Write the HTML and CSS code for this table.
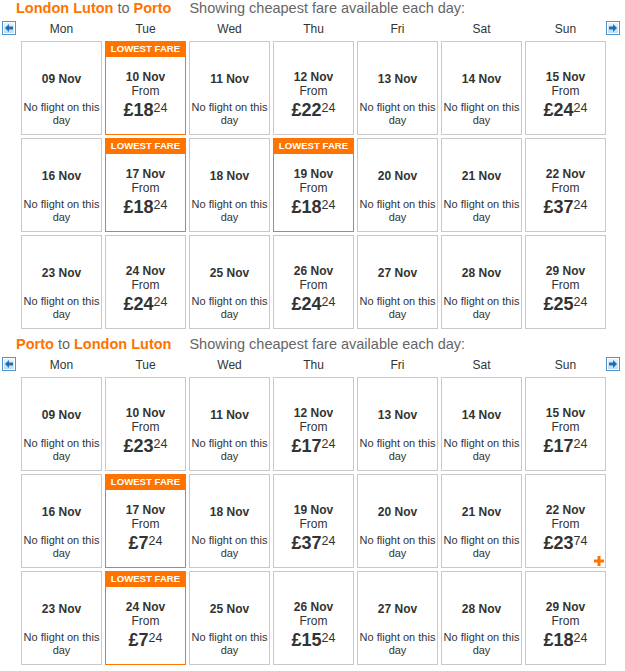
FILE: index.html
```html
<!DOCTYPE html>
<html>
<head>
<meta charset="utf-8">
<link rel="stylesheet" href="styles.css">
</head>
<body>
<div class="section">
  <div class="title"><span class="place">London Luton</span> <span class="to">to</span> <span class="place">Porto</span><span class="sub">Showing cheapest fare available each day:</span></div>
  <div class="weekrow">
    <div class="navl"><svg class="arrow" width="14" height="14" viewBox="0 0 14 14"><defs><linearGradient id="g1" x1="0" y1="0" x2="0" y2="1"><stop offset="0" stop-color="#eaf5fd"/><stop offset="1" stop-color="#b9daf2"/></linearGradient></defs><rect x="0.5" y="0.5" width="13" height="13" fill="url(#g1)" stroke="#4f94cd"/><rect x="1.5" y="1.5" width="11" height="11" fill="none" stroke="#ffffff"/><path d="M3 7 L7 3 L7 5.5 L11 5.5 L11 8.5 L7 8.5 L7 11 Z" fill="#1f6fb5"/></svg></div>
    <div class="days"><span>Mon</span><span>Tue</span><span>Wed</span><span>Thu</span><span>Fri</span><span>Sat</span><span>Sun</span></div>
    <div class="navr"><svg class="arrow" width="14" height="14" viewBox="0 0 14 14"><defs><linearGradient id="g2" x1="0" y1="0" x2="0" y2="1"><stop offset="0" stop-color="#eaf5fd"/><stop offset="1" stop-color="#b9daf2"/></linearGradient></defs><rect x="0.5" y="0.5" width="13" height="13" fill="url(#g2)" stroke="#4f94cd"/><rect x="1.5" y="1.5" width="11" height="11" fill="none" stroke="#ffffff"/><path d="M11 7 L7 3 L7 5.5 L3 5.5 L3 8.5 L7 8.5 L7 11 Z" fill="#1f6fb5"/></svg></div>
  </div>
  <div class="grid">
    <div class="cell nf"><div class="strip"></div><div class="date">09 Nov</div><div class="msg">No flight on this day</div></div>
    <div class="cell low"><div class="strip">LOWEST FARE</div><div class="date">10 Nov</div><div class="from">From</div><div class="price">£18<sup>24</sup></div></div>
    <div class="cell nf"><div class="strip"></div><div class="date">11 Nov</div><div class="msg">No flight on this day</div></div>
    <div class="cell"><div class="strip"></div><div class="date">12 Nov</div><div class="from">From</div><div class="price">£22<sup>24</sup></div></div>
    <div class="cell nf"><div class="strip"></div><div class="date">13 Nov</div><div class="msg">No flight on this day</div></div>
    <div class="cell nf"><div class="strip"></div><div class="date">14 Nov</div><div class="msg">No flight on this day</div></div>
    <div class="cell"><div class="strip"></div><div class="date">15 Nov</div><div class="from">From</div><div class="price">£24<sup>24</sup></div></div>

    <div class="cell nf"><div class="strip"></div><div class="date">16 Nov</div><div class="msg">No flight on this day</div></div>
    <div class="cell low"><div class="strip">LOWEST FARE</div><div class="date">17 Nov</div><div class="from">From</div><div class="price">£18<sup>24</sup></div></div>
    <div class="cell nf"><div class="strip"></div><div class="date">18 Nov</div><div class="msg">No flight on this day</div></div>
    <div class="cell low"><div class="strip">LOWEST FARE</div><div class="date">19 Nov</div><div class="from">From</div><div class="price">£18<sup>24</sup></div></div>
    <div class="cell nf"><div class="strip"></div><div class="date">20 Nov</div><div class="msg">No flight on this day</div></div>
    <div class="cell nf"><div class="strip"></div><div class="date">21 Nov</div><div class="msg">No flight on this day</div></div>
    <div class="cell"><div class="strip"></div><div class="date">22 Nov</div><div class="from">From</div><div class="price">£37<sup>24</sup></div></div>

    <div class="cell nf"><div class="strip"></div><div class="date">23 Nov</div><div class="msg">No flight on this day</div></div>
    <div class="cell"><div class="strip"></div><div class="date">24 Nov</div><div class="from">From</div><div class="price">£24<sup>24</sup></div></div>
    <div class="cell nf"><div class="strip"></div><div class="date">25 Nov</div><div class="msg">No flight on this day</div></div>
    <div class="cell"><div class="strip"></div><div class="date">26 Nov</div><div class="from">From</div><div class="price">£24<sup>24</sup></div></div>
    <div class="cell nf"><div class="strip"></div><div class="date">27 Nov</div><div class="msg">No flight on this day</div></div>
    <div class="cell nf"><div class="strip"></div><div class="date">28 Nov</div><div class="msg">No flight on this day</div></div>
    <div class="cell"><div class="strip"></div><div class="date">29 Nov</div><div class="from">From</div><div class="price">£25<sup>24</sup></div></div>
  </div>
</div>

<div class="section second">
  <div class="title"><span class="place">Porto</span> <span class="to">to</span> <span class="place">London Luton</span><span class="sub">Showing cheapest fare available each day:</span></div>
  <div class="weekrow">
    <div class="navl"><svg class="arrow" width="14" height="14" viewBox="0 0 14 14"><defs><linearGradient id="g3" x1="0" y1="0" x2="0" y2="1"><stop offset="0" stop-color="#eaf5fd"/><stop offset="1" stop-color="#b9daf2"/></linearGradient></defs><rect x="0.5" y="0.5" width="13" height="13" fill="url(#g3)" stroke="#4f94cd"/><rect x="1.5" y="1.5" width="11" height="11" fill="none" stroke="#ffffff"/><path d="M3 7 L7 3 L7 5.5 L11 5.5 L11 8.5 L7 8.5 L7 11 Z" fill="#1f6fb5"/></svg></div>
    <div class="days"><span>Mon</span><span>Tue</span><span>Wed</span><span>Thu</span><span>Fri</span><span>Sat</span><span>Sun</span></div>
    <div class="navr"><svg class="arrow" width="14" height="14" viewBox="0 0 14 14"><defs><linearGradient id="g4" x1="0" y1="0" x2="0" y2="1"><stop offset="0" stop-color="#eaf5fd"/><stop offset="1" stop-color="#b9daf2"/></linearGradient></defs><rect x="0.5" y="0.5" width="13" height="13" fill="url(#g4)" stroke="#4f94cd"/><rect x="1.5" y="1.5" width="11" height="11" fill="none" stroke="#ffffff"/><path d="M11 7 L7 3 L7 5.5 L3 5.5 L3 8.5 L7 8.5 L7 11 Z" fill="#1f6fb5"/></svg></div>
  </div>
  <div class="grid">
    <div class="cell nf"><div class="strip"></div><div class="date">09 Nov</div><div class="msg">No flight on this day</div></div>
    <div class="cell"><div class="strip"></div><div class="date">10 Nov</div><div class="from">From</div><div class="price">£23<sup>24</sup></div></div>
    <div class="cell nf"><div class="strip"></div><div class="date">11 Nov</div><div class="msg">No flight on this day</div></div>
    <div class="cell"><div class="strip"></div><div class="date">12 Nov</div><div class="from">From</div><div class="price">£17<sup>24</sup></div></div>
    <div class="cell nf"><div class="strip"></div><div class="date">13 Nov</div><div class="msg">No flight on this day</div></div>
    <div class="cell nf"><div class="strip"></div><div class="date">14 Nov</div><div class="msg">No flight on this day</div></div>
    <div class="cell"><div class="strip"></div><div class="date">15 Nov</div><div class="from">From</div><div class="price">£17<sup>24</sup></div></div>

    <div class="cell nf"><div class="strip"></div><div class="date">16 Nov</div><div class="msg">No flight on this day</div></div>
    <div class="cell low"><div class="strip">LOWEST FARE</div><div class="date">17 Nov</div><div class="from">From</div><div class="price">£7<sup>24</sup></div></div>
    <div class="cell nf"><div class="strip"></div><div class="date">18 Nov</div><div class="msg">No flight on this day</div></div>
    <div class="cell"><div class="strip"></div><div class="date">19 Nov</div><div class="from">From</div><div class="price">£37<sup>24</sup></div></div>
    <div class="cell nf"><div class="strip"></div><div class="date">20 Nov</div><div class="msg">No flight on this day</div></div>
    <div class="cell nf"><div class="strip"></div><div class="date">21 Nov</div><div class="msg">No flight on this day</div></div>
    <div class="cell"><div class="strip"></div><div class="date">22 Nov</div><div class="from">From</div><div class="price">£23<sup>74</sup></div><svg class="plus" width="10" height="10" viewBox="0 0 10 10"><rect x="3.5" y="0" width="3" height="10" fill="#ff7300"/><rect x="0" y="3.5" width="10" height="3" fill="#ff7300"/></svg></div>

    <div class="cell nf"><div class="strip"></div><div class="date">23 Nov</div><div class="msg">No flight on this day</div></div>
    <div class="cell low"><div class="strip">LOWEST FARE</div><div class="date">24 Nov</div><div class="from">From</div><div class="price">£7<sup>24</sup></div></div>
    <div class="cell nf"><div class="strip"></div><div class="date">25 Nov</div><div class="msg">No flight on this day</div></div>
    <div class="cell"><div class="strip"></div><div class="date">26 Nov</div><div class="from">From</div><div class="price">£15<sup>24</sup></div></div>
    <div class="cell nf"><div class="strip"></div><div class="date">27 Nov</div><div class="msg">No flight on this day</div></div>
    <div class="cell nf"><div class="strip"></div><div class="date">28 Nov</div><div class="msg">No flight on this day</div></div>
    <div class="cell"><div class="strip"></div><div class="date">29 Nov</div><div class="from">From</div><div class="price">£18<sup>24</sup></div></div>
  </div>
</div>
</body>
</html>
```
FILE: styles.css
```css
html, body {
  margin: 0;
  padding: 0;
  background: #ffffff;
}
body {
  font-family: "Liberation Sans", Arial, sans-serif;
  color: #333333;
  width: 625px;
}
.section.second {
  margin-top: 7px;
}
.title {
  padding-left: 16px;
  height: 16px;
  font-size: 14.5px;
  line-height: 16px;
  white-space: nowrap;
}
.place {
  color: #ff7300;
  font-weight: bold;
}
.to {
  color: #666666;
}
.sub {
  color: #666666;
  margin-left: 18px;
}
.weekrow {
  display: flex;
  height: 25px;
  box-sizing: border-box;
  padding-top: 6px;
}
.navl {
  width: 21px;
  flex: none;
}
.navl .arrow {
  margin-left: 2px;
  margin-top: -1px;
  display: block;
}
.navr .arrow {
  margin-top: -1px;
  display: block;
}
.days {
  display: grid;
  grid-template-columns: repeat(7, 81px);
  column-gap: 3px;
  font-size: 12px;
  line-height: 15px;
  color: #333333;
}
.days span {
  text-align: center;
}
.grid {
  display: grid;
  grid-template-columns: repeat(7, 81px);
  grid-auto-rows: 94px;
  gap: 3px;
  padding-left: 21px;
}
.cell {
  position: relative;
  box-sizing: border-box;
  border: 1px solid #c9c9c9;
  background: #ffffff;
  text-align: center;
  overflow: hidden;
}
.cell.low {
  border-color: #ff7300;
}
.strip {
  height: 15px;
  font-size: 9.6px;
  font-weight: bold;
  line-height: 14px;
  color: #ffffff;
  white-space: nowrap;
}
.low .strip {
  background: #ff7300;
}
.date {
  margin-top: 13px;
  font-size: 12px;
  font-weight: bold;
  line-height: 14px;
}
.nf .date {
  margin-top: 15px;
}
.from {
  font-size: 12px;
  line-height: 14px;
}
.price {
  margin-top: 2px;
  font-size: 18px;
  font-weight: bold;
  line-height: 20px;
  white-space: nowrap;
}
.price sup {
  font-size: 12.5px;
  font-weight: normal;
  vertical-align: top;
  line-height: 12px;
  position: relative;
  top: 2px;
}
.msg {
  margin-top: 15px;
  font-size: 11px;
  line-height: 13px;
  padding: 0 1px;
}
.plus {
  position: absolute;
  right: 1px;
  bottom: 1px;
  display: block;
}
```
